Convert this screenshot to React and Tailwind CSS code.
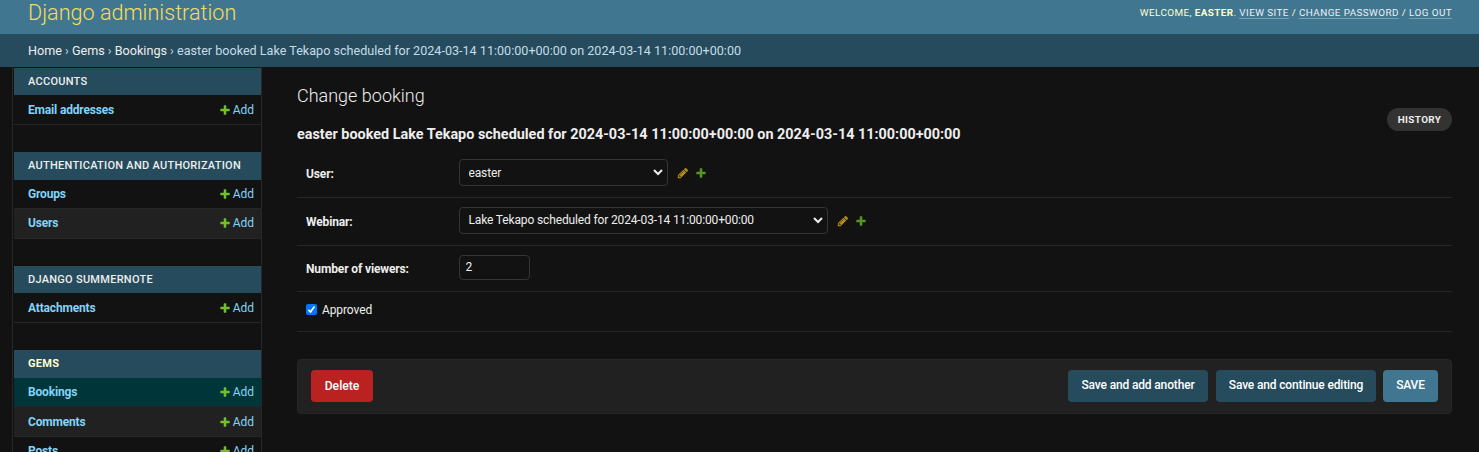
const PlusIcon = ({ className }) => (
  <svg viewBox="0 0 1792 1792" className={className} fill="#70bf2b" aria-hidden="true">
    <path d="M1600 796v192q0 40-28 68t-68 28h-416v416q0 40-28 68t-68 28h-192q-40 0-68-28t-28-68v-416h-416q-40 0-68-28t-28-68v-192q0-40 28-68t68-28h416v-416q0-40 28-68t68-28h192q40 0 68 28t28 68v416h416q40 0 68 28t28 68z" />
  </svg>
);

const PencilIcon = ({ className }) => (
  <svg viewBox="0 0 1792 1792" className={className} fill="#efb80b" aria-hidden="true">
    <path d="M491 1536l91-91-235-235-91 91v107h128v128h107zm523-928q0-22-22-22-10 0-17 7l-542 542q-7 7-7 17 0 22 22 22 10 0 17-7l542-542q7-7 7-17zm-54-192l416 416-832 832h-416v-416zm683 96q0 53-37 90l-166 166-416-416 166-165q36-38 90-38 53 0 91 38l235 234q37 39 37 91z" />
  </svg>
);

const modules = [
  { name: "Accounts", caption: "h-[27px] pt-px", rows: [{ label: "Email addresses", style: "h-[30px]" }] },
  {
    name: "Authentication and Authorization",
    caption: "h-7",
    rows: [
      { label: "Groups", style: "h-[29px]" },
      { label: "Users", style: "h-[30px] bg-[#212121] pb-[2px]" },
    ],
  },
  { name: "Django Summernote", caption: "h-[27px] pt-px", rows: [{ label: "Attachments", style: "h-[30px]" }] },
  {
    name: "Gems",
    caption: "h-7",
    current: true,
    rows: [
      { label: "Bookings", style: "h-[29px] bg-[#003639]" },
      { label: "Comments", style: "h-[30px] bg-[#212121]" },
      { label: "Posts", style: "h-[29px]" },
    ],
  },
];

function Sidebar() {
  return (
    <nav className="ml-3 flex h-[385px] w-[250px] shrink-0 flex-col gap-[27px] overflow-hidden border-x border-[#272727] pt-px pl-px">
      {modules.map((m) => (
        <section key={m.name} className="shrink-0">
          <h2
            className={`${m.caption} flex items-center bg-[#264b5d] pl-[14px] text-[11px] tracking-[0.27px] uppercase ${
              m.current ? "font-bold text-[#ffffcc]" : "font-medium text-[#eeeeee]"
            }`}
          >
            {m.name}
          </h2>
          {m.rows.map((r) => (
            <div key={r.label} className={`${r.style} flex items-center justify-between border-b border-[#272727] pr-[7px] pl-[14px] text-[12px] leading-[18px] text-[#81d4fa]`}>
              <a className="font-bold tracking-[-0.17px]">{r.label}</a>
              <a className="flex items-center gap-[2px]">
                <PlusIcon className="size-3" />
                Add
              </a>
            </div>
          ))}
        </section>
      ))}
    </nav>
  );
}

function Select({ value, width, textOffset }) {
  return (
    <div className={`relative h-[27px] ${width}`}>
      <select className={`block h-full w-full appearance-none rounded-[4px] border border-[#353535] bg-[#121212] pr-6 pl-[8.5px] text-[12px] tracking-[-0.14px] text-[#eeeeee] ${textOffset}`}>
        <option>{value}</option>
      </select>
      <svg viewBox="0 0 10 7" className="pointer-events-none absolute top-[10px] right-[5px] h-[7px] w-[10px]" fill="none" stroke="#eeeeee" strokeWidth="2">
        <path d="M1 1l4 4 4-4" />
      </svg>
    </div>
  );
}

function RelatedField({ label, value, width, textOffset }) {
  return (
    <div className="flex h-12 border-b border-[#272727] pt-[9px] pl-[9px]">
      <label className="w-[153px] pt-[6px] text-[12px] leading-[18px] font-bold tracking-[-0.13px] text-[#eeeeee]">{label}</label>
      <Select value={value} width={width} textOffset={textOffset} />
      <div className="flex gap-[6px] pt-[8px] pl-[9px] opacity-75">
        <PencilIcon className="size-3" />
        <PlusIcon className="size-3" />
      </div>
    </div>
  );
}

const HeaderLink = ({ children }) => <a className="border-b border-white/30 text-white/90">{children}</a>;

const Crumb = ({ children }) => <a className="text-[#eeeeee]">{children}</a>;

export default function App() {
  return (
    <div className="h-[452px] overflow-hidden bg-[#121212] font-[Roboto,sans-serif] text-[#eeeeee]">
      <header className="flex h-[34px] justify-between bg-[#417690] pr-[27px] pl-7">
        <h1 className="-mt-[3px] text-[21.6px] leading-[32px] font-light whitespace-nowrap text-[#f5dd5d]">Django administration</h1>
        <div className="pt-[6px] text-[9.9px] leading-[14px] tracking-[0.41px] whitespace-nowrap text-[#ffffcc] uppercase">
          Welcome, <strong className="font-bold">easter</strong>. <HeaderLink>View site</HeaderLink> / <HeaderLink>Change password</HeaderLink> /{" "}
          <HeaderLink>Log out</HeaderLink>
        </div>
      </header>
      <div className="h-[33px] bg-[#264b5d] pl-7 text-[12.6px] leading-[33px] whitespace-nowrap text-[#c4dce8]">
        <Crumb>Home</Crumb> › <Crumb>Gems</Crumb> › <Crumb>Bookings</Crumb> › easter booked Lake Tekapo scheduled for 2024-03-14 11:00:00+00:00 on 2024-03-14 11:00:00+00:00
      </div>
      <div className="flex">
        <Sidebar />
        <main className="min-w-0 flex-1 pr-[27px] pl-[35px]">
          <h1 className="pt-[18px] text-[18px] leading-[22px] font-light">Change booking</h1>
          <div className="flex h-[43px] items-start justify-between">
            <h2 className="pt-[19px] text-[14.4px] leading-[18px] font-bold">
              easter booked Lake Tekapo scheduled for 2024-03-14 11:00:00+00:00 on 2024-03-14 11:00:00+00:00
            </h2>
            <a className="mt-px flex h-[23px] w-[65px] items-center justify-center rounded-full bg-[#333333] pt-px text-[9.9px] font-bold tracking-[0.4px]">HISTORY</a>
          </div>
          <form>
            <RelatedField label="User:" value="easter" width="w-[209px]" textOffset="pt-px" />
            <RelatedField label="Webinar:" value="Lake Tekapo scheduled for 2024-03-14 11:00:00+00:00" width="w-[369px]" textOffset="pb-px" />
            <div className="flex h-[46px] border-b border-[#272727] pt-[9px] pl-[9px]">
              <label className="w-[153px] pt-[5px] text-[12px] leading-[18px] font-bold tracking-[-0.13px]">Number of viewers:</label>
              <input className="h-[25px] w-[71px] rounded-[4px] border border-[#353535] bg-[#121212] px-[5.5px] pb-[2px] text-[12px]" defaultValue="2" />
            </div>
            <div className="flex h-10 border-b border-[#272727] pt-[12px] pl-[9px]">
              <span className="flex size-[11px] items-center justify-center rounded-[2px] bg-[#0075ff]">
                <svg viewBox="0 0 11 11" className="size-[11px]" fill="none" stroke="white" strokeWidth="1.7">
                  <path d="M2.4 5.8l2.1 2.1 4-5.3" />
                </svg>
              </span>
              <label className="-mt-[3px] ml-[5px] text-[12px] leading-[18px] tracking-[-0.1px]">Approved</label>
            </div>
            <div className="mt-[27px] flex h-[55px] gap-2 rounded-[4px] border border-[#272727] bg-[#212121] px-[13px] pt-[10px] text-[12px] font-medium tracking-[-0.15px] text-white">
              <a className="mr-auto flex h-8 w-[62px] items-center justify-center rounded-[4px] bg-[#ba2121] text-[12.2px] tracking-normal">Delete</a>
              <button type="button" className="h-8 w-[140px] rounded-[4px] bg-[#264b5d] pb-[3px]">Save and add another</button>
              <button type="button" className="h-8 w-[160px] rounded-[4px] bg-[#264b5d] pb-[3px]">Save and continue editing</button>
              <button type="button" className="-ml-px h-8 w-[55px] rounded-[4px] bg-[#417690] pb-[3px]">SAVE</button>
            </div>
          </form>
        </main>
      </div>
    </div>
  );
}
